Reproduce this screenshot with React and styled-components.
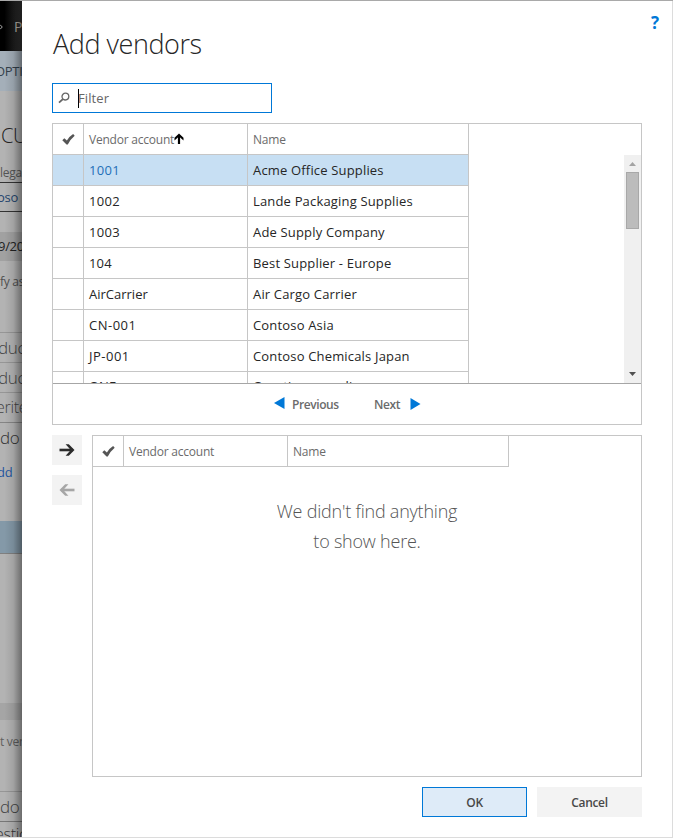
import React from "react";
import styled, { createGlobalStyle } from "styled-components";

const GlobalStyle = createGlobalStyle`
  *, *::before, *::after { box-sizing: border-box; }
  html, body { margin: 0; padding: 0; overflow: hidden; }
  body { font-family: "Open Sans", "Noto Sans", sans-serif; background: #fff; }
`;

const line = "#c6c6c6";
const blue = "#0078d7";

const Screen = styled.div`
  display: flex;
  width: 673px;
  height: 838px;
  overflow: hidden;
  background: #fff;
  border-top: 1px solid #a9a9a9;
  border-bottom: 1px solid #dcdcdc;
`;

/* dimmed page behind the dialog */
const Backdrop = styled.aside`
  position: relative;
  display: flex;
  flex-direction: column;
  flex: 0 0 22px;
  overflow: hidden;
  background: #b3b3b3;
  &::after {
    content: "";
    position: absolute;
    inset: 0;
    background: linear-gradient(to right, rgba(0,0,0,0) 20%, rgba(0,0,0,.09) 60%, rgba(0,0,0,.4) 100%);
  }
`;

const Strip = styled.div`
  display: flex;
  align-items: center;
  flex: 0 0 ${(p) => p.$h}px;
  height: ${(p) => p.$h}px;
  padding-top: ${(p) => p.$drop || 0}px;
  background: ${(p) => p.$bg || "transparent"};
  border-bottom: ${(p) => (p.$line ? `1px solid ${p.$line}` : "0")};
  color: ${(p) => p.$color || "#555"};
  font-size: ${(p) => p.$size || 12}px;
  font-weight: ${(p) => p.$weight || 400};
  line-height: 1;
  white-space: nowrap;
  overflow: hidden;
`;

const Fragment = styled.span`
  flex: none;
  margin-left: ${(p) => p.$shift || 0}px;
  padding-bottom: 1px;
  letter-spacing: -0.3px;
`;

const Dialog = styled.main`
  display: flex;
  flex-direction: column;
  flex: 1;
  min-width: 0;
  padding: 0 30px 20px;
  border-right: 1px solid #dcdcdc;
`;

const Header = styled.header`
  display: flex;
  justify-content: space-between;
  height: 82px;
  margin-right: -21px;
`;

const Title = styled.h1`
  margin: 24px 0 0 1px;
  font-size: 27px;
  line-height: 38px;
  font-weight: 300;
  letter-spacing: -0.45px;
  color: #262626;
`;

const Help = styled.button`
  width: 12px;
  height: 20px;
  margin-top: 12px;
  padding: 0;
  border: 0;
  background: none;
  font: 700 17px/20px "Open Sans", sans-serif;
  text-align: left;
  color: ${blue};
`;

const FilterBox = styled.label`
  display: flex;
  align-items: center;
  width: 220px;
  height: 30px;
  padding-left: 5px;
  border: 1px solid ${blue};
  font-size: 13px;
  color: #666;
`;

const Caret = styled.span`
  width: 1px;
  height: 19px;
  margin-left: 8px;
  background: #000;
`;

const Placeholder = styled.span`
  margin-left: -1px;
  letter-spacing: 0.1px;
`;

const SourcePanel = styled.section`
  height: 302px;
  margin-top: 10px;
  border: 1px solid ${line};
`;

const GridRow = styled.div`
  display: grid;
  grid-template-columns: 31px 164px 221px;
  width: 416px;
  height: 31px;
  background: ${(p) => (p.$selected ? "#c7dff3" : "#fff")};
`;

const Cell = styled.div`
  display: flex;
  align-items: center;
  justify-content: ${(p) => (p.$center ? "center" : "flex-start")};
  padding-left: ${(p) => (p.$center ? 0 : 5)}px;
  padding-bottom: ${(p) => p.$raise || 0}px;
  border-right: 1px solid ${line};
  border-bottom: 1px solid ${line};
  font-size: 13px;
  letter-spacing: ${(p) => p.$track || 0}px;
  color: ${(p) => (p.$link ? "#1f6fb8" : "#262626")};
  white-space: nowrap;
`;

const HeadCell = styled(Cell)`
  font-size: 12px;
  letter-spacing: -0.22px;
  color: #6b6b6b;
`;

const ScrollArea = styled.div`
  display: flex;
  justify-content: space-between;
  height: 229px;
  overflow: hidden;
  border-bottom: 1px solid #a6a6a6;
`;

const Rows = styled.div`
  height: 228px;
  overflow: hidden;
`;

const Scrollbar = styled.div`
  display: flex;
  flex-direction: column;
  align-items: center;
  width: 17px;
  height: 228px;
  background: #f0f0f0;
`;

const ScrollArrow = styled.div`
  display: flex;
  align-items: center;
  justify-content: center;
  width: 17px;
  height: 17px;
  padding-bottom: ${(p) => p.$raise || 0}px;
`;

const Thumb = styled.div`
  width: 13px;
  height: 57px;
  margin-bottom: auto;
  background: #bcbcbc;
  border: 1px solid #a8a8a8;
`;

const Pager = styled.nav`
  display: flex;
  align-items: center;
  height: 40px;
  padding: 0 0 0 221px;
  font-size: 12px;
  font-weight: 600;
  letter-spacing: -0.42px;
  color: #6b6b6b;
`;

const PageLink = styled.span`
  margin: ${(p) => p.$m};
  width: ${(p) => p.$w}px;
  white-space: nowrap;
`;

const LowerArea = styled.div`
  display: flex;
  gap: 10px;
  height: 342px;
  margin-top: 10px;
`;

const MoveButtons = styled.div`
  display: flex;
  flex-direction: column;
  gap: 10px;
`;

const MoveButton = styled.button`
  display: flex;
  align-items: center;
  justify-content: center;
  width: 30px;
  height: 30px;
  padding: 0;
  border: 0;
  background: #f3f3f3;
  color: ${(p) => (p.$dim ? "#a6a6a6" : "#2b2b2b")};
`;

const TargetPanel = styled.section`
  flex: 1;
  border: 1px solid ${line};
`;

const Empty = styled.p`
  width: 200px;
  margin: 29px 0 0 174px;
  font-size: 18px;
  line-height: 30px;
  font-weight: 300;
  letter-spacing: -0.22px;
  text-align: center;
  white-space: nowrap;
  color: #555;
`;

const Footer = styled.footer`
  display: flex;
  justify-content: flex-end;
  gap: 10px;
  margin-top: 10px;
`;

const Action = styled.button`
  width: 105px;
  height: 30px;
  padding: 2px 0 0;
  border: 1px solid ${(p) => (p.$primary ? blue : "#f3f3f3")};
  background: ${(p) => (p.$primary ? "#deebf8" : "#f3f3f3")};
  font: 600 12px/26px "Open Sans", sans-serif;
  letter-spacing: -0.35px;
  color: #484848;
`;

const Check = () => (
  <svg width="13" height="11" viewBox="0 0 13 11">
    <path d="M.3 6.2 2.3 4.2 4.9 6.5Q7.7 2.2 11.1.1L12.7 1.7Q8.5 5 5.8 10.6H4.5Z" fill="#555" />
  </svg>
);

const Arrow = ({ flip }) => (
  <svg width="16" height="12" viewBox="0 0 16 12">
    <g transform={flip ? "matrix(-1 0 0 1 16 0)" : undefined} fill="none" stroke="currentColor">
      <path d="M.5 6H14" strokeWidth="2.6" />
      <path d="M6.6.2H9.8L15.5 6 9.8 11.8H6.6L11.8 6Z" fill="currentColor" stroke="none" />
    </g>
  </svg>
);

const SortUp = () => (
  <svg width="10" height="12" viewBox="0 0 10 12">
    <path d="M5 2V11" fill="none" stroke="#000" strokeWidth="2.2" />
    <path d="M5 .5 9.5 4.8V7.4L5 3.4.5 7.4V4.8Z" fill="#000" />
  </svg>
);

const Magnifier = () => (
  <svg width="12" height="12" viewBox="0 0 12 12" fill="none" stroke="#666">
    <circle cx="7.4" cy="4.6" r="3.4" strokeWidth="1.3" />
    <path d="M4.9 7.1 1 10.6" strokeWidth="1.9" />
  </svg>
);

const PageArrow = styled.svg`
  margin-bottom: ${(p) => p.$raise}px;
`;

const Triangle = ({ left }) => (
  <PageArrow $raise={left ? 3 : 1} width="11" height="12" viewBox="0 0 11 12">
    <path d={left ? "M10.5 0V12L0 6Z" : "M.5 0V12L10.5 6Z"} fill={blue} />
  </PageArrow>
);

const vendors = [
  ["1001", "Acme Office Supplies", 0.3],
  ["1002", "Lande Packaging Supplies", 0.3],
  ["1003", "Ade Supply Company", 0.3],
  ["104", "Best Supplier - Europe", 0.15],
  ["AirCarrier", "Air Cargo Carrier", 0],
  ["CN-001", "Contoso Asia", 0.5],
  ["JP-001", "Contoso Chemicals Japan", 0.5],
  ["ONE", "One-time supplier", 0],
];

const strips = [
  { h: 40, bg: "#a4afb9", text: "OPTI", shift: -5, size: 13, color: "#34414c", drop: 2 },
  { h: 26 },
  { h: 38, text: "CU", shift: 1, size: 20, color: "#222", weight: 300 },
  { h: 28, text: "lega", size: 12, color: "#555", line: "#333", drop: 9 },
  { h: 29, text: "oso", shift: -3, size: 13, color: "#25466f", line: "#333", drop: 2 },
  { h: 20 },
  { h: 29, bg: "#a1a1a1", text: "9/20", shift: -2, size: 13, color: "#222" },
  { h: 42, text: "fy as", size: 12, color: "#505050" },
  { h: 30, line: "#969696" },
  { h: 30, text: "duc", shift: -2, size: 17, color: "#444", line: "#969696", weight: 300 },
  { h: 30, text: "duc", shift: -2, size: 17, color: "#444", line: "#969696", weight: 300 },
  { h: 30, text: "erite", shift: -4, size: 16, color: "#444", line: "#858585", weight: 300 },
  { h: 30, text: "do", shift: 0, size: 17, color: "#333", weight: 300 },
  { h: 39, text: "dd", shift: -3, size: 13, color: "#2456a0" },
  { h: 29 },
  { h: 33, bg: "#8499a8", line: "#808080" },
  { h: 149 },
  { h: 17, bg: "#a5a5a5" },
  { h: 42, text: "t ver", size: 12, color: "#606060", drop: 2 },
  { h: 30, line: "#969696" },
  { h: 30, text: "do", shift: 0, size: 17, color: "#444", line: "#777", weight: 300 },
  { h: 24, text: "estic", shift: -5, size: 16, color: "#333", weight: 300 },
];

const GridHead = ({ sorted }) => (
  <GridRow>
    <HeadCell $center><Check /></HeadCell>
    <HeadCell>Vendor account{sorted && <SortUp />}</HeadCell>
    <HeadCell>Name</HeadCell>
  </GridRow>
);

export default function App() {
  return (
    <>
      <GlobalStyle />
      <Screen>
        <Backdrop>
          <Strip $h={50} $bg="linear-gradient(90deg, #000 20%, #333)" $color="#b8b0a6" $size={14} $drop={2}>
            <svg width="5" height="10" viewBox="0 0 5 10" fill="none" stroke="#bbb" strokeWidth="1.6">
              <path d="M0 1 4 5 0 9" />
            </svg>
            <Fragment $shift={11}>P</Fragment>
          </Strip>
          {strips.map((s, i) => (
            <Strip key={i} $h={s.h} $drop={s.drop} $bg={s.bg} $line={s.line} $color={s.color} $size={s.size} $weight={s.weight}>
              {s.text && <Fragment $shift={s.shift}>{s.text}</Fragment>}
            </Strip>
          ))}
        </Backdrop>
        <Dialog>
          <Header>
            <Title>Add vendors</Title>
            <Help>?</Help>
          </Header>
          <FilterBox>
            <Magnifier />
            <Caret />
            <Placeholder>Filter</Placeholder>
          </FilterBox>
          <SourcePanel>
            <GridHead sorted />
            <ScrollArea>
              <Rows>
                {vendors.map(([id, name, track], i) => (
                  <GridRow key={id} $selected={i === 0}>
                    <Cell $center />
                    <Cell $link={i === 0} $track={track} $raise={i === 7 ? 2 : 0}>{id}</Cell>
                    <Cell $track={0.17} $raise={i === 7 ? 2 : 0}>{name}</Cell>
                  </GridRow>
                ))}
              </Rows>
              <Scrollbar>
                <ScrollArrow>
                  <svg width="7" height="4" viewBox="0 0 7 4"><path d="M0 4 3.5 0 7 4Z" fill="#a3a3a3" /></svg>
                </ScrollArrow>
                <Thumb />
                <ScrollArrow $raise={2}>
                  <svg width="7" height="4" viewBox="0 0 7 4"><path d="M0 0 3.5 4 7 0Z" fill="#505050" /></svg>
                </ScrollArrow>
              </Scrollbar>
            </ScrollArea>
            <Pager>
              <Triangle left />
              <PageLink $m="0 0 0 7px" $w={82}>Previous</PageLink>
              <PageLink $w={36}>Next</PageLink>
              <Triangle />
            </Pager>
          </SourcePanel>
          <LowerArea>
            <MoveButtons>
              <MoveButton><Arrow /></MoveButton>
              <MoveButton $dim><Arrow flip /></MoveButton>
            </MoveButtons>
            <TargetPanel>
              <GridHead />
              <Empty>We didn't find anything<br />to show here.</Empty>
            </TargetPanel>
          </LowerArea>
          <Footer>
            <Action $primary>OK</Action>
            <Action>Cancel</Action>
          </Footer>
        </Dialog>
      </Screen>
    </>
  );
}
